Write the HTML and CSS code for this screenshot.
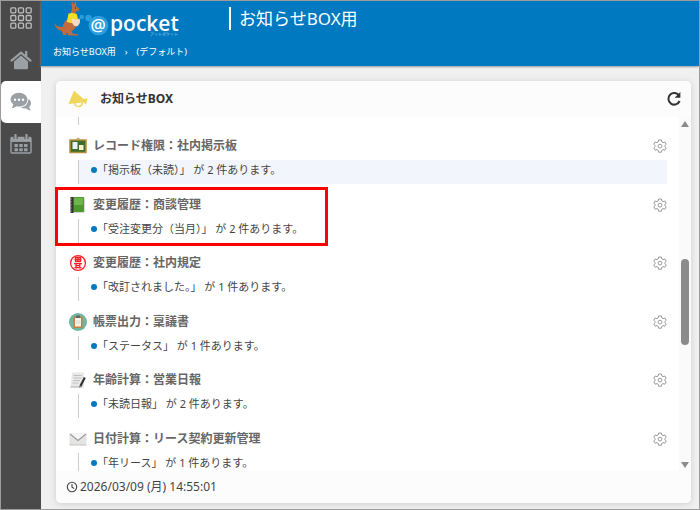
FILE: index.html
```html
<!DOCTYPE html>
<html lang="ja">
    <head>
        <meta charset="utf-8">
        <title>お知らせBOX用</title>
        <link rel="stylesheet" href="styles.css">
    </head>

    <body>
        <!-- shared gear icon -->
        <svg class="defs" width="0" height="0">
            <symbol id="gear" viewBox="0 0 14 14">
                <path d="M5.6 1h2.8l.4 1.9 1.2.7 1.9-.6 1.3 2.3-1.4 1.3v1l1.4 1.3-1.3 2.3-1.9-.6-1.2.7-.4 1.9H5.6l-.4-1.9-1.2-.7-1.900.6L.8 8.900l1.400-1.300v-1L.8 5.300 2.100 3l1.900.6 1.200-.7z"/>
                <circle cx="7" cy="7.100" r="1.900"/>
            </symbol>
        </svg>

        <div class="app">
            <nav class="sidebar">
                <a href="#" class="side_link side_first" aria-label="menu">
                    <svg width="22" height="22" viewBox="0 0 22 22" fill="none" stroke="#bdbdbd" stroke-width="1.3">
                        <rect x=".8" y=".8" width="5" height="5" rx="1"/><rect x="8.500" y=".8" width="5" height="5" rx="1"/><rect x="16.200" y=".8" width="5" height="5" rx="1"/>
                        <rect x=".8" y="8.500" width="5" height="5" rx="1"/><rect x="8.500" y="8.500" width="5" height="5" rx="1"/><rect x="16.200" y="8.500" width="5" height="5" rx="1"/>
                        <rect x=".8" y="16.200" width="5" height="5" rx="1"/><rect x="8.500" y="16.200" width="5" height="5" rx="1"/><rect x="16.200" y="16.200" width="5" height="5" rx="1"/>
                    </svg>
                </a>
                <a href="#" class="side_link" aria-label="home">
                    <svg width="22" height="20" viewBox="0 0 22 20" fill="#9ba0a5">
                        <path d="M4 11.500L11 5.600l7 5.900V18q0 1.200-1.200 1.200H5.200Q4 19.200 4 18z"/>
                        <path d="M1.500 10.600L11 2.600l9.500 8M16.200 1.800v4" fill="none" stroke="#9ba0a5" stroke-width="2.200" stroke-linecap="round"/>
                    </svg>
                </a>
                <a href="#" class="side_link side_active" aria-label="chat">
                    <svg width="22" height="20" viewBox="0 0 22 20" fill="#9ba0a5">
                        <path d="M18.500 7q3 2 2.400 5-.4 1.900-1.800 3 .3 2 1.800 3.400-2.600.1-4.600-1.900-3.300.5-5.300-1.300 7-.8 7.500-8.200z"/>
                        <path d="M9 .8c4.700 0 8.400 3 8.400 6.900S13.700 14.600 9 14.600q-1.400 0-2.600-.4-2 1.900-4.800 1.900 1.500-1.600 1.700-3.500Q.6 10.600.6 7.700C.6 3.800 4.300.8 9 .8z"/>
                        <g fill="#fff"><circle cx="5" cy="7.700" r="1.200"/><circle cx="9" cy="7.700" r="1.200"/><circle cx="13" cy="7.700" r="1.200"/></g>
                    </svg>
                </a>
                <a href="#" class="side_link" aria-label="calendar">
                    <svg width="22" height="20" viewBox="0 0 22 20" fill="none" stroke="#9ba0a5">
                        <rect x="1" y="3.500" width="20" height="15.500" rx="1" stroke-width="1.400"/>
                        <path d="M1 5.700h20" stroke-width="4.400"/>
                        <path d="M5.500 1v4M16.500 1v4" stroke="#4a4a4a" stroke-width="4"/>
                        <path d="M5.500 1v4M16.500 1v4" stroke-width="2.200" stroke-linecap="round"/>
                        <path d="M4.500 11.500h3.400M9.300 11.500h3.400M14.100 11.500h3.400M4.500 15.800h3.400M9.300 15.800h3.400M14.100 15.800h3.400" stroke-width="3"/>
                    </svg>
                </a>
            </nav>

            <div class="page">
                <header class="top">
                    <div class="top_row">
                        <svg class="logo" width="128" height="38" viewBox="0 0 128 38">
                            <!-- kangaroo: tail and legs, head, shirt, pouch -->
                            <path d="M.8 21.500q3.500 5 8.700 4.500 1-5.500 5.200-8l8.500.5q1.500 5-.8 8.500l-4 3.500 1.600 2 5 .8q.6 1.200-1 1.200h-8.500l-1.500-3q-1.600.8-.2 2.600h-3.600l-1.600-4.200Q3.500 29.500.8 21.500z" fill="#bd6b3f"/>
                            <path d="M18.700 0q1.700 1.300 2 4 .4-2.500 2-3.800 1 2.400.2 4.800 3.200 1.800 3.600 3.800-.6 1.800-3.800 1.400l-.6 4-5-1q1.700-3.600 2-6.700Q18 3.500 18.700 0z" fill="#bd6b3f"/>
                            <path d="M15.500 12.500q4-1 8.300.6l1.200 5-1 4q-5 .8-10.200-1.100z" fill="#f5de28"/>
                            <path d="M18.800 17.500q3.500 1.800 7.700 0 1.600 4.500-2 7.800-6 .8-5.700-7.800z" fill="#f4d9c4"/>
                            <circle cx="22.500" cy="6.800" r=".6" fill="#3a2418"/>
                            <circle cx="28.700" cy="16" r="2.200" fill="#2b9edb"/>
                            <circle cx="35.500" cy="17" r="3.200" fill="#2b9edb"/>
                            <circle cx="45.500" cy="24.500" r="9.800" fill="#2b9edb"/>
                            <text class="logo_at" x="45" y="30" text-anchor="middle">@</text>
                            <text class="logo_name" x="57" y="30">pocket</text>
                            <text class="logo_kana" x="97" y="35">アットポケット</text>
                        </svg>
                        <h1>お知らせBOX用</h1>
                    </div>
                    <div class="crumbs">
                        <a href="#">お知らせBOX用</a>
                        <span>›</span>
                        <a href="#">(デフォルト)</a>
                    </div>
                </header>

                <main class="card">
                    <div class="card_head">
                        <svg width="20" height="18" viewBox="0 0 20 18" fill="#f0d65c">
                            <path d="M6 .5L15.500 9l4-.7-1.500 6.200-2.500-2L.5 14z"/>
                            <path d="M6.500 12.500q.5 4 4 4t3.800-4" fill="none" stroke="#f0d65c" stroke-width="1.500"/>
                        </svg>
                        <h2>お知らせBOX</h2>
                        <button type="button" class="icon_btn" aria-label="reload">
                            <svg width="16" height="16" viewBox="0 0 16 16" fill="none" stroke="#333" stroke-width="2">
                                <path d="M13.200 4.800A5.800 5.800 0 1 0 13.600 10"/>
                                <path d="M14.400 1v5.800H8.600z" fill="#333" stroke="none"/>
                            </svg>
                        </button>
                    </div>

                    <div class="card_body">
                        <div class="list">
                            <div class="stub"></div>

                            <section class="notice">
                                <div class="notice_head">
                                    <svg width="18" height="18" viewBox="0 0 18 18">
                                        <path d="M7 2.500L9 1l2 1.500" fill="none" stroke="#c9a257"/>
                                        <rect x="1" y="3" width="16" height="12.500" fill="#3f6b2c" stroke="#b58f3c" stroke-width="1.500"/>
                                        <rect x="3.500" y="5" width="5" height="7" fill="#e8f1f5"/>
                                        <rect x="10" y="8" width="4.500" height="5" fill="#f4efcf"/>
                                    </svg>
                                    <h3>レコード権限：社内掲示板</h3>
                                    <button type="button" class="icon_btn gear" aria-label="設定"><svg width="14" height="14"><use href="#gear"/></svg></button>
                                </div>
                                <p class="item item_hover"><a href="#">「掲示板（未読）」 が 2 件あります。</a></p>
                            </section>

                            <section class="notice notice_marked">
                                <div class="notice_head">
                                    <svg width="18" height="18" viewBox="0 0 18 18">
                                        <rect x="2" y="1.500" width="14" height="15.500" rx="1" fill="#d8d8d8"/>
                                        <rect x="4" y="1" width="11" height="15" rx="1" fill="#4c9a2c"/>
                                        <rect x="5" y="2" width="9" height="7" fill="#6db548"/>
                                        <rect x="1.500" y="1" width="3" height="16" fill="#333"/>
                                        <path d="M1 3h2M1 6h2M1 9h2M1 12h2M1 15h2" stroke="#999" stroke-width=".8"/>
                                    </svg>
                                    <h3>変更履歴：商談管理</h3>
                                    <button type="button" class="icon_btn gear" aria-label="設定"><svg width="14" height="14"><use href="#gear"/></svg></button>
                                </div>
                                <p class="item"><a href="#">「受注変更分（当月）」 が 2 件あります。</a></p>
                            </section>

                            <section class="notice">
                                <div class="notice_head">
                                    <svg width="18" height="18" viewBox="0 0 18 18" fill="none" stroke="#fb1f24">
                                        <circle cx="9" cy="9" r="7.400" stroke-width="1.300"/>
                                        <path d="M6 3.500h6M5.500 5.500h7M6 7.500h6M9 3v5M6.500 3.500v4M11.500 3.500v4M5 9.700h8M6.500 11.700h5M5.500 13.700h7M7 9.500v5M10.800 9.500v5" stroke-width="1.300"/>
                                    </svg>
                                    <h3>変更履歴：社内規定</h3>
                                    <button type="button" class="icon_btn gear" aria-label="設定"><svg width="14" height="14"><use href="#gear"/></svg></button>
                                </div>
                                <p class="item"><a href="#">「改訂されました。」 が 1 件あります。</a></p>
                            </section>

                            <section class="notice">
                                <div class="notice_head">
                                    <svg width="18" height="18" viewBox="0 0 18 18">
                                        <circle cx="9" cy="9" r="9" fill="#6fb7a1"/>
                                        <rect x="4.500" y="3.500" width="9" height="11.500" rx="1" fill="#c77b45"/>
                                        <rect x="6" y="5" width="6" height="8.500" fill="#f6f3ee"/>
                                        <rect x="7" y="2.500" width="4" height="2.500" fill="#666"/>
                                        <path d="M7 8h4M7 10h4" stroke="#ccc" stroke-width=".7"/>
                                    </svg>
                                    <h3>帳票出力：稟議書</h3>
                                    <button type="button" class="icon_btn gear" aria-label="設定"><svg width="14" height="14"><use href="#gear"/></svg></button>
                                </div>
                                <p class="item"><a href="#">「ステータス」 が 1 件あります。</a></p>
                            </section>

                            <section class="notice">
                                <div class="notice_head">
                                    <svg width="18" height="18" viewBox="0 0 18 18">
                                        <path d="M3 1.500h12V16H1.500z" fill="#e9e9e9"/>
                                        <path d="M1.500 16h12" stroke="#aaa"/>
                                        <path d="M4.500 4.500h8M4.500 7h8M4 9.500h7M3.500 12h6" stroke="#bbb" stroke-width=".9"/>
                                        <path d="M15.800 6.500L11.500 15" stroke="#333" stroke-width="2.200"/>
                                        <path d="M10.500 14.500l2 1-2.300 1.500z" fill="#777"/>
                                    </svg>
                                    <h3>年齢計算：営業日報</h3>
                                    <button type="button" class="icon_btn gear" aria-label="設定"><svg width="14" height="14"><use href="#gear"/></svg></button>
                                </div>
                                <p class="item"><a href="#">「未読日報」 が 2 件あります。</a></p>
                            </section>

                            <section class="notice">
                                <div class="notice_head">
                                    <svg width="18" height="18" viewBox="0 0 18 18">
                                        <rect x=".5" y="3.500" width="17" height="11.500" fill="#e4e4e2"/>
                                        <path d="M.5 15h17" stroke="#c4c4c4"/>
                                        <path d="M1 4l8 6.500L17 4" fill="#f5f5f5" stroke="#999" stroke-width="1.100"/>
                                    </svg>
                                    <h3>日付計算：リース契約更新管理</h3>
                                    <button type="button" class="icon_btn gear" aria-label="設定"><svg width="14" height="14"><use href="#gear"/></svg></button>
                                </div>
                                <p class="item"><a href="#">「年リース」 が 1 件あります。</a></p>
                            </section>
                        </div>

                        <div class="scrollbar">
                            <span class="arrow_up"></span>
                            <div class="track"><div class="thumb"></div></div>
                            <span class="arrow_down"></span>
                        </div>
                    </div>

                    <footer class="card_foot">
                        <svg width="12" height="12" viewBox="0 0 12 12" fill="none" stroke="#444" stroke-width="1.100">
                            <circle cx="6" cy="6" r="4.700"/>
                            <path d="M6 3v3.200l2.200 1.300"/>
                        </svg>
                        <time>2026/03/09 (月) 14:55:01</time>
                    </footer>
                </main>
            </div>
        </div>
    </body>
</html>
```
FILE: styles.css
```css
* {
    box-sizing: border-box;
}

body {
    margin: 0;
    font-family: "Noto Sans", "Noto Sans CJK JP", sans-serif;
    font-size: 12px;
    color: #444;
}

h1, h2, h3, p {
    margin: 0;
}

a {
    color: inherit;
    text-decoration: none;
}

svg {
    display: block;
    flex: none;
}

.defs {
    position: absolute;
}

.app {
    display: flex;
    height: 100vh;
    border: 1px solid #9c9c9c;
    background-color: #f0f0f0;
}

/* left menu */
.sidebar {
    width: 40px;
    flex: none;
    background-color: #4a4a4a;
}

.side_link {
    display: flex;
    align-items: center;
    justify-content: center;
    height: 42px;
}

.side_first {
    height: 38px;
    padding-bottom: 4px;
}

.side_active {
    background-color: white;
    border-radius: 5px 0 0 5px;
}

.page {
    flex: 1;
    min-width: 0;
    display: flex;
    flex-direction: column;
}

/* blue header */
.top {
    flex: none;
    height: 65px;
    padding-left: 12px;
    background-color: #0079c1;
    color: white;
    box-shadow: 0 1px 2px #999;
}

.top_row {
    display: flex;
    align-items: flex-start;
    gap: 48px;
}

.top h1 {
    margin-top: 6px;
    padding-left: 8px;
    border-left: 2px solid white;
    font-size: 17px;
    font-weight: normal;
    line-height: 23px;
}

.logo_at, .logo_name {
    font-family: "Open Sans", sans-serif;
    font-weight: 600;
    fill: white;
}

.logo_at {
    font-size: 17px;
}

.logo_name {
    font-size: 21px;
}

.logo_kana {
    font-size: 4px;
    fill: #a5cfe8;
}

.crumbs {
    display: flex;
    gap: 9px;
    font-size: 9px;
    line-height: 26px;
}

/* notice card */
.card {
    flex: 1;
    min-height: 0;
    display: flex;
    flex-direction: column;
    margin: 15px 8px 6px 15px;
    border-radius: 5px;
    background-color: white;
    box-shadow: 0 1px 6px #ccc;
}

.card_head {
    flex: none;
    display: flex;
    align-items: center;
    gap: 12px;
    height: 36px;
    padding: 0 9px 0 12px;
    border-radius: 5px 5px 0 0;
    background-color: #fcfcfc;
}

.card_head h2 {
    flex: 1;
    font-size: 12px;
    line-height: 20px;
    color: #333;
}

.icon_btn {
    padding: 0;
    border: none;
    background: none;
    cursor: pointer;
}

.gear svg {
    fill: none;
    stroke: #999;
    stroke-width: 1;
}

.card_body {
    flex: 1;
    min-height: 0;
    display: flex;
}

.list {
    flex: 1;
    display: grid;
    grid-template-rows: 8px repeat(5, 1fr) 46px;
    row-gap: 7px;
    padding: 0 12px 0 13px;
}

.stub {
    margin-left: 9px;
    border-left: 1px solid #ccc;
}

.notice {
    min-height: 0;
}

.notice:last-child {
    overflow: hidden;
}

.notice_head {
    display: flex;
    align-items: center;
    gap: 6px;
    height: 28px;
}

.notice_head h3 {
    flex: 1;
    font-size: 12px;
    line-height: 20px;
    color: #666;
}

.item {
    display: flex;
    align-items: center;
    height: 24px;
    margin-left: 9px;
    padding: 0 0 4px 12px;
    border-left: 1px solid #ccc;
    font-size: 11px;
    line-height: 20px;
}

.item::before {
    content: "";
    width: 6px;
    height: 6px;
    border-radius: 50%;
    background-color: #0079c1;
}

.item_hover {
    background-color: #f2f6fc;
}

/* red frame lies over the list */
.notice_marked {
    position: relative;
}

.notice_marked::after {
    content: "";
    position: absolute;
    top: -4px;
    bottom: -4px;
    left: -14px;
    width: 267px;
    border: 3px solid #f00;
    pointer-events: none;
}

.scrollbar {
    flex: none;
    display: flex;
    flex-direction: column;
    align-items: center;
    width: 12px;
    padding: 4px 0 3px;
    background-color: #fafafa;
}

.track {
    flex: 1;
    display: flex;
    flex-direction: column;
    justify-content: center;
    padding-top: 15px;
}

.thumb {
    width: 8px;
    height: 27%;
    border-radius: 4px;
    background-color: #8b8b8b;
}

.arrow_up, .arrow_down {
    border: 4px solid transparent;
    border-top-width: 0;
    border-bottom: 6px solid #8b8b8b;
}

.arrow_down {
    border-bottom: none;
    border-top: 6px solid #8b8b8b;
}

.card_foot {
    flex: none;
    display: flex;
    align-items: center;
    gap: 2px;
    height: 32px;
    padding-left: 10px;
    border-radius: 0 0 5px 5px;
    background-color: #fcfcfc;
    line-height: 20px;
}
```
